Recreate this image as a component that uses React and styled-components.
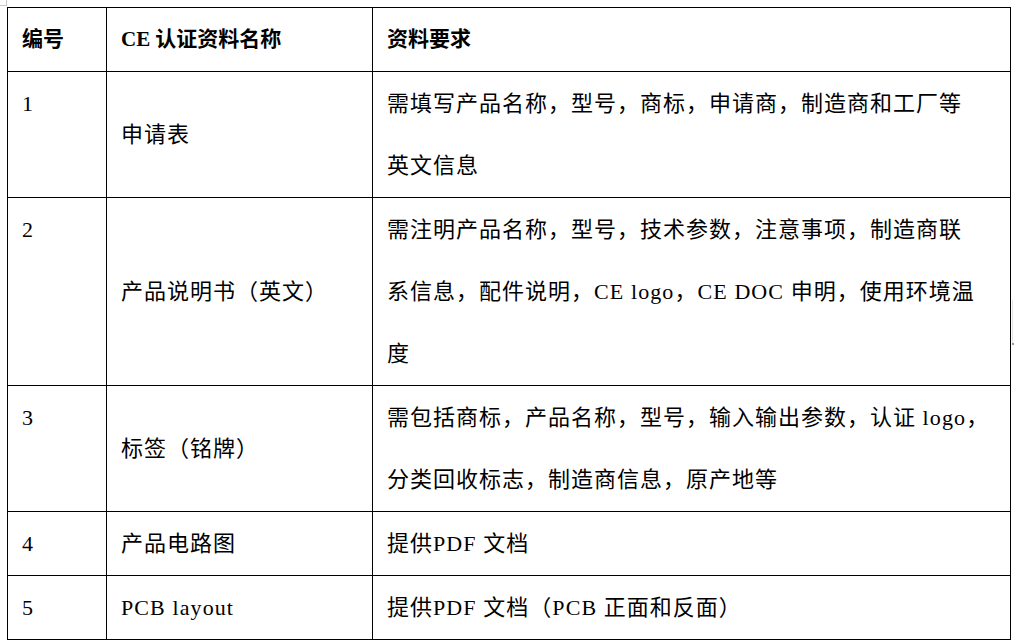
import React from "react";
import styled, { createGlobalStyle } from "styled-components";

const GlobalStyle = createGlobalStyle`
  html, body {
    margin: 0;
    padding: 0;
    background: #ffffff;
  }
  body {
    font-family: "Noto Sans CJK SC", "Noto Sans", sans-serif;
    color: #000;
  }
`;

const Page = styled.div`
  position: relative;
  width: 1014px;
  height: 642px;
  padding: 7px 0 0 7px;
  box-sizing: border-box;
  overflow: hidden;
`;

const CornerMark = styled.div`
  position: absolute;
  left: 0;
  top: 0;
  width: 6px;
  height: 5px;
  border-right: 1px solid #c8c8c8;
  border-bottom: 1px solid #c8c8c8;
`;

const SideMark = styled.div`
  position: absolute;
  left: 1012px;
  top: 300px;
  width: 1px;
  height: 45px;
  background: #e2e2e2;
  &::after {
    content: "";
    position: absolute;
    left: 0;
    bottom: 0;
    width: 2px;
    height: 2px;
    background: #9a9a9a;
  }
`;

const Table = styled.table`
  border-collapse: collapse;
  table-layout: fixed;
  width: 1003px;
`;

const HeadCell = styled.th`
  border: 1px solid #000;
  padding: 0 0 1px 14px;
  text-align: left;
  vertical-align: middle;
  font-weight: 700;
  font-size: 21px;
  white-space: nowrap;
`;

const Cell = styled.td`
  border: 1px solid #000;
  padding: 0 0 1px 14px;
  vertical-align: ${(p) => (p.$middle ? "middle" : "top")};
  font-size: 22px;
  letter-spacing: 1px;
  white-space: nowrap;
`;

const Line = styled.div`
  height: 62px;
  line-height: 58px;
  overflow: visible;
`;

const Latin = styled.span`
  font-family: "Liberation Serif", serif;
  font-size: 22px;
  letter-spacing: 1.1px;
  line-height: 1;
`;

const HeadLatin = styled.span`
  font-family: "Liberation Serif", serif;
  font-size: 21px;
  line-height: 1;
  margin-right: 5px;
`;

const rows = [
  {
    no: "1",
    name: ["申请表"],
    req: [["需填写产品名称，型号，商标，申请商，制造商和工厂等"], ["英文信息"]],
  },
  {
    no: "2",
    name: ["产品说明书（英文）"],
    req: [
      ["需注明产品名称，型号，技术参数，注意事项，制造商联"],
      ["系信息，配件说明，", { l: "CE logo" }, "，", { l: "CE DOC " }, "申明，使用环境温"],
      ["度"],
    ],
  },
  {
    no: "3",
    name: ["标签（铭牌）"],
    req: [
      ["需包括商标，产品名称，型号，输入输出参数，认证", { l: " logo" }, "，"],
      ["分类回收标志，制造商信息，原产地等"],
    ],
  },
  {
    no: "4",
    name: ["产品电路图"],
    req: [["提供", { l: "PDF " }, "文档"]],
  },
  {
    no: "5",
    name: [{ l: "PCB layout" }],
    req: [["提供", { l: "PDF " }, "文档（", { l: "PCB " }, "正面和反面）"]],
  },
];

const renderParts = (parts) =>
  parts.map((p, i) =>
    typeof p === "string" ? <React.Fragment key={i}>{p}</React.Fragment> : <Latin key={i}>{p.l}</Latin>
  );

export default function App() {
  return (
    <>
      <GlobalStyle />
      <Page>
        <CornerMark />
        <SideMark />
        <Table>
          <colgroup>
            <col style={{ width: 99 }} />
            <col style={{ width: 266 }} />
            <col style={{ width: 638 }} />
          </colgroup>
          <thead>
            <tr>
              <HeadCell>
                <Line>编号</Line>
              </HeadCell>
              <HeadCell>
                <Line>
                  <HeadLatin>CE</HeadLatin>认证资料名称
                </Line>
              </HeadCell>
              <HeadCell>
                <Line>资料要求</Line>
              </HeadCell>
            </tr>
          </thead>
          <tbody>
            {rows.map((r) => (
              <tr key={r.no}>
                <Cell>
                  <Line>
                    <Latin>{r.no}</Latin>
                  </Line>
                </Cell>
                <Cell $middle>
                  <Line>{renderParts(r.name)}</Line>
                </Cell>
                <Cell>
                  {r.req.map((line, i) => (
                    <Line key={i}>{renderParts(line)}</Line>
                  ))}
                </Cell>
              </tr>
            ))}
          </tbody>
        </Table>
      </Page>
    </>
  );
}
